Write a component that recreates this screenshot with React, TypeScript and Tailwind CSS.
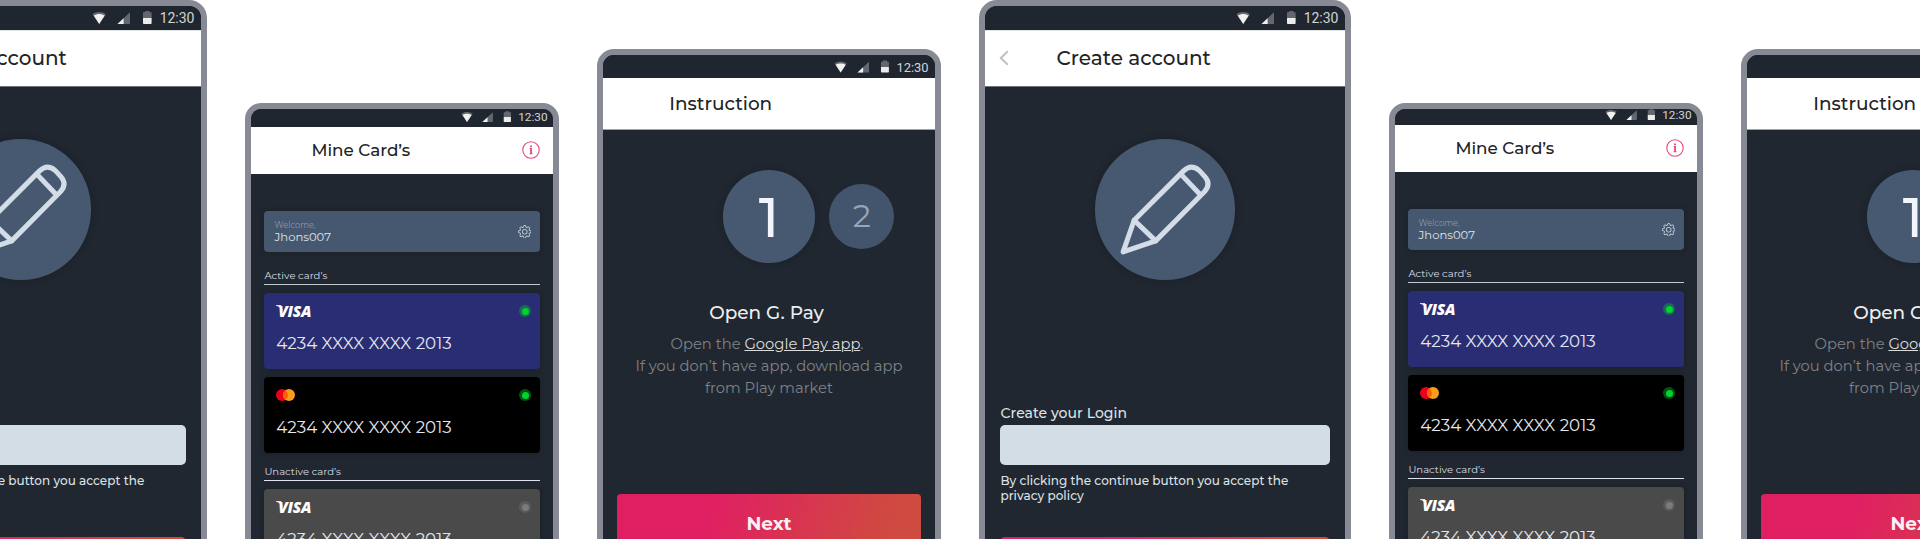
import React from "react";
import { BsGear } from "react-icons/bs";

function StatusBar({ iconClass, className, timeClass }: { iconClass: string; className: string; timeClass: string }) {
  return (
    <div className={`flex items-end justify-end overflow-hidden bg-[#20262f] ${className}`}>
      <svg viewBox="0 0 60 24" className={`shrink-0 ${iconClass}`}>
        <path d="M0.5 8.2C4.2 5.2 10.2 5.2 13.9 8.2L7.2 18Z" fill="#64686e" />
        <path d="M1.7 9.600C5 7.5 9.4 7.5 12.7 9.600L7.2 18Z" fill="#f1f1f1" />
        <path d="M38 6.2V18H25.5Z" fill="#64686e" />
        <path d="M31.6 12.2V18H25.5Z" fill="#f1f1f1" />
        <path d="M51 6.3H53V5H57.6V6.3H59.6V12H51Z" fill="#64686e" />
        <path d="M51 12H59.6V17.2Q59.6 18 58.8 18H51.8Q51 18 51 17.2Z" fill="#ececec" />
      </svg>
      <span className={`shrink-0 font-['Roboto',sans-serif] text-[#d3d4d5] ${timeClass}`}>12:30</span>
    </div>
  );
}

function Pencil() {
  return (
    <svg viewBox="0 0 140 140" className="h-full w-full" fill="none" stroke="#d3dde7" strokeWidth="5" strokeLinejoin="round" strokeLinecap="round">
      <path d="M28 112.5L39 81L88 32Q96 24.500 104 31.500L109.500 37.500Q116 45 109 52.500L60.500 101.500Z" />
      <path d="M39 81L60.500 101.500M85.500 35L105 55.500" />
    </svg>
  );
}

function CreateAccount() {
  return (
    <div className="h-[660px] w-[372px] shrink-0 overflow-hidden rounded-[18px] border-6 border-[#878a94] bg-[#202730]">
      <StatusBar className="h-6" iconClass="h-6 w-[60px]" timeClass="ml-[7.500px] mr-[6.500px] text-[14px] leading-6" />
      <div className="flex h-[57px] items-center border-t border-b border-t-[#e4e5e6] border-b-[#6f7379] bg-white pb-px">
        <svg viewBox="0 0 10 16" className="ml-[14px] h-4 w-[10px]" fill="none" stroke="#c0c0c0" strokeWidth="2">
          <path d="M8.800 1.300L1.800 8L8.800 14.700" />
        </svg>
        <h2 className="ml-[47.600px] text-[20px] leading-6 font-medium text-[#222326]">Create account</h2>
      </div>
      <div className="px-[15px] pt-[52px]">
        <div className="mx-auto size-[140.500px] rounded-full bg-[#475970] shadow-[0_0_8px_rgba(0,0,0,0.2)]">
          <Pencil />
        </div>
        <label className="mt-[123px] block pl-[0.500px] text-[14px] leading-5 font-medium tracking-[0.040px] text-[#dfe2e6]">Create your Login</label>
        <div className="mt-[2.500px] h-10 rounded-[5px] bg-[#d3dde6]" />
        <p className="mt-2 pl-[0.500px] text-[12px] leading-[15px] font-medium tracking-[0.030px] text-[#dfe2e6]">
          By clicking the continue button you accept the
          <br />
          privacy policy
        </p>
        <div className="mt-[34px] h-14 rounded-[5px] bg-[linear-gradient(105deg,#e01f62_30%,#cf4a40_88%)]" />
      </div>
    </div>
  );
}

function Visa() {
  return (
    <div className="relative flex items-center">
      <svg viewBox="0 0 8 6" className="absolute top-[3px] left-0 h-[6px] w-[8px]">
        <path d="M0 0H5L7 6Q4.500 2 0 0.800Z" fill="#fff" fillOpacity="0.850" />
      </svg>
      <span className="pl-[2px] font-['Open_Sans',sans-serif] text-[15.500px] leading-[18px] font-extrabold tracking-[-0.300px] text-white italic">VISA</span>
    </div>
  );
}

function Mastercard() {
  return (
    <svg viewBox="0 0 19 12" className="h-3 w-[19px]">
      <circle cx="6" cy="6" r="6" fill="#eb001b" />
      <circle cx="13" cy="6" r="6" fill="#f79e1b" />
      <path d="M9.500 1.130A6 6 0 0 1 9.500 10.870A6 6 0 0 1 9.500 1.130Z" fill="#ff5f00" />
    </svg>
  );
}

function PayCard({ kind, bg, dot, ring }: { kind: "visa" | "mc"; bg: string; dot: string; ring: string }) {
  return (
    <div className={`h-[75.500px] rounded-[4px] pt-[9px] pr-[9px] pl-[12.300px] shadow-[0_0_6px_rgba(0,0,0,0.2)] ${bg}`}>
      <div className="flex h-[18px] items-center justify-between">
        {kind === "visa" ? <Visa /> : <Mastercard />}
        <div className={`flex size-3 items-center justify-center rounded-full ${ring}`}>
          <div className={`size-[7px] rounded-full ${dot}`} />
        </div>
      </div>
      <div className="mt-[12.600px] text-[16.700px] leading-5 whitespace-nowrap text-[#e6e7ee]">4234 XXXX XXXX 2013</div>
    </div>
  );
}

function MineCards({ statusHeight }: { statusHeight: string }) {
  return (
    <div className="mt-[103px] h-[556px] w-[314px] shrink-0 overflow-hidden rounded-[16px] border-6 border-[#878a94] bg-[#202730]">
      <StatusBar className={statusHeight} iconClass="h-[20.100px] w-[50.300px]" timeClass="ml-[6.500px] mr-[5.500px] text-[11.750px] leading-5" />
      <div className="flex h-[47px] items-center justify-between bg-white pr-[13px] pb-px pl-[60.400px]">
        <h2 className="text-[16.800px] leading-5 font-medium text-[#222326]">Mine Card’s</h2>
        <svg viewBox="0 0 18 18" className="size-[18px]" fill="none" stroke="#e4437d" strokeWidth="1.100">
          <circle cx="9" cy="9" r="8.200" />
          <path d="M7.700 7.500H9.200V12.700M7.700 12.700H10.500" />
          <path d="M9 4.600V6.200" strokeWidth="1.800" />
          <path d="M9 7.500V13" strokeWidth="1.500" />
        </svg>
      </div>
      <div className="px-[13px] pt-[37px]">
        <div className="flex h-[41px] items-center justify-between rounded-[4px] bg-[#46586f] pr-[9px] pl-[10.500px] shadow-[0_0_6px_rgba(0,0,0,0.2)]">
          <div>
            <div className="text-[8.300px] leading-[10px] text-[#8797aa]">Welcome,</div>
            <div className="text-[11.600px] leading-[14px] text-[#dde3ea]">Jhons007</div>
          </div>
          <BsGear className="size-[13.500px] text-[#c5d0dc]" />
        </div>
        <div className="mt-[15px] h-[18px] border-b border-[#c0c9cf] pl-[0.400px] text-[10.070px] leading-[17px] text-[#dcdfe4]">Active card’s</div>
        <div className="mt-2 flex flex-col gap-[8.500px]">
          <PayCard kind="visa" bg="bg-[#292d73]" dot="bg-[#00d42c]" ring="bg-[#1c6859]" />
          <PayCard kind="mc" bg="bg-black" dot="bg-[#00d42c]" ring="bg-[#045213]" />
        </div>
        <div className="mt-[10.500px] h-[18px] border-b border-[#dfe2ec] pl-[0.400px] text-[10.070px] leading-[17px] text-[#dcdfe4]">Unactive card’s</div>
        <div className="mt-2">
          <PayCard kind="visa" bg="bg-[#4a4a4a]" dot="bg-[#7b7b7b]" ring="bg-[#5b5b5b]" />
        </div>
      </div>
    </div>
  );
}

function Instruction() {
  return (
    <div className="mt-[49px] h-[610px] w-[344px] shrink-0 overflow-hidden rounded-[17px] border-6 border-[#878a94] bg-[#202730]">
      <StatusBar className="h-[23px]" iconClass="h-[22.100px] w-[55.300px]" timeClass="ml-[7px] mr-[6.500px] text-[12.900px] leading-[21px]" />
      <div className="flex h-[52px] items-center border-b border-[#9ba3a6] bg-white pl-[66.300px]">
        <h2 className="text-[18.440px] leading-6 font-medium text-[#222326]">Instruction</h2>
      </div>
      <div className="px-[14px] pt-10">
        <div className="ml-[105.700px] flex items-center gap-[14px]">
          <div className="flex size-[92.600px] items-center justify-center rounded-full bg-[#475970] pt-[2px] text-[55.300px] leading-none font-medium text-[#f3f5fc] shadow-[0_0_8px_rgba(0,0,0,0.2)]">1</div>
          <div className="flex size-[65px] items-center justify-center rounded-full bg-[#43556c] text-[32px] leading-none text-[#98a5b2]">2</div>
        </div>
        <h3 className="mt-[38px] pr-[5px] text-center text-[18.440px] leading-6 font-medium text-[#eceef1]">Open G. Pay</h3>
        <p className="mt-2 text-center text-[14.750px] leading-[22.100px] whitespace-nowrap text-[#7e8289]">
          <span className="pr-1">
            Open the <span className="text-[#dcdcdc] underline">Google Pay app</span>.
          </span>
          <br />
          If you don’t have app, download app
          <br />
          from Play market
        </p>
        <div className="mt-[95px] flex h-[58px] items-center justify-center rounded-[4px] bg-[linear-gradient(105deg,#e01f62_30%,#cf4a40_88%)] pt-[2px] text-[18.440px] leading-6 font-bold text-[#fbeff4]">
          Next
        </div>
      </div>
    </div>
  );
}

export default function App() {
  return (
    <div className="h-[539px] overflow-hidden bg-white font-['Montserrat','Inter',sans-serif]">
      <div className="-ml-[165px] flex items-start gap-[38px]">
        <CreateAccount />
        <MineCards statusHeight="h-[18px]" />
        <Instruction />
        <CreateAccount />
        <MineCards statusHeight="h-4" />
        <Instruction />
      </div>
    </div>
  );
}
